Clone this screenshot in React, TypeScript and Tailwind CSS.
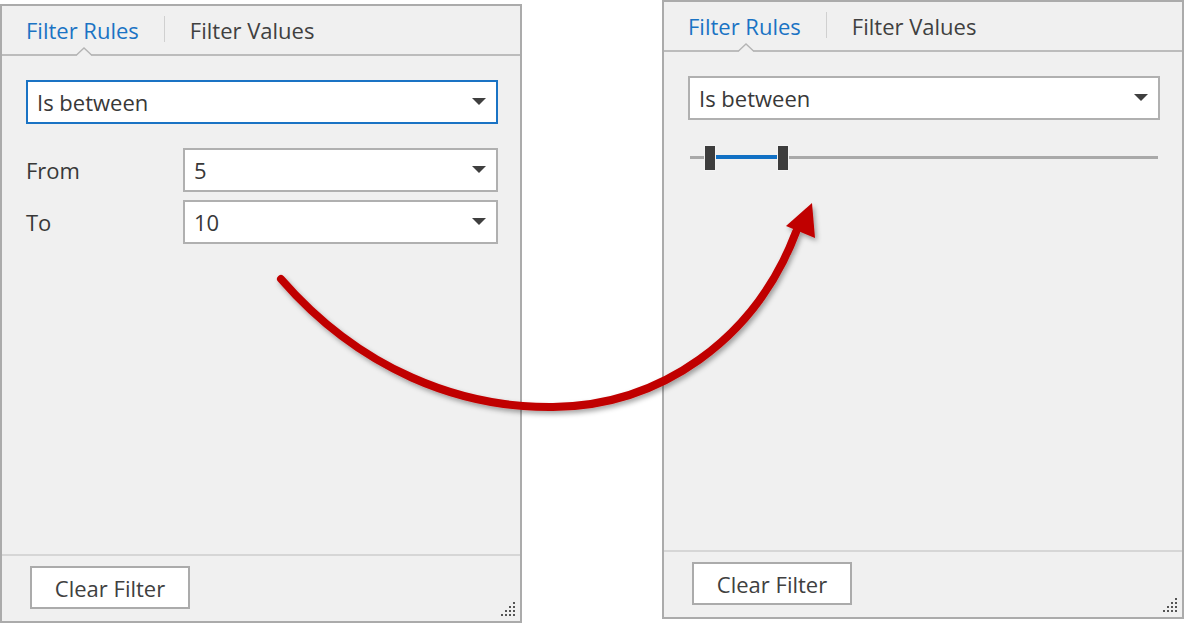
import React from "react";

function Caret() {
  return (
    <svg width="14" height="8" viewBox="0 0 14 8" className="block">
      <polygon points="0,0 14,0 7,7" fill="#3f3f3f" />
    </svg>
  );
}

function Dropdown({ value, focused, w }: { value: string; focused?: boolean; w: string }) {
  return (
    <div
      className={
        "h-[44px] bg-white flex items-center justify-between pl-[9px] pr-[10px] " +
        w +
        (focused ? " border-2 border-[#1a73c4]" : " border-2 border-[#b0b0b0]")
      }
    >
      <span className="text-[22px] text-[#383838] leading-none">{value}</span>
      <Caret />
    </div>
  );
}

function Grip() {
  const dots: [number, number][] = [];
  for (let r = 0; r < 4; r++) {
    for (let c = 3 - r; c < 4; c++) dots.push([c, r]);
  }
  return (
    <svg width="16" height="16" viewBox="0 0 16 16" className="absolute right-[4px] bottom-[4px]">
      {dots.map(([c, r], i) => (
        <rect key={i} x={c * 4 + 1} y={r * 4 + 1} width="2" height="2" fill="#555555" />
      ))}
    </svg>
  );
}

function Panel({ kind }: { kind: "left" | "right" }) {
  return (
    <div className="w-[522px] h-[619px] border-2 border-[#ababab] bg-[#f0f0f0] flex flex-col relative">
      {/* tabs */}
      <div className="h-[50px] border-b-2 border-[#bcbcbc] flex items-center relative shrink-0">
        <span className="ml-[24px] text-[22px] text-[#1a73c4] leading-none">Filter Rules</span>
        <span className="ml-[25px] w-[1px] h-[26px] bg-[#d0d0d0] -mt-[2px]" />
        <span className="ml-[25px] text-[22px] text-[#404040] leading-none">Filter Values</span>
        <svg width="16" height="9" viewBox="0 0 16 9" className="absolute left-[74px] bottom-[-2px]">
          <polygon points="0,9 8,1 16,9" fill="#f0f0f0" />
          <polyline points="0,8.5 8,1 16,8.5" fill="none" stroke="#b4b4b4" strokeWidth="1.3" />
        </svg>
      </div>
      {/* content */}
      <div className="flex-1 flex flex-col pl-[24px] pt-[24px]">
        <Dropdown value="Is between" focused={kind === "left"} w="w-[472px]" />
        {kind === "left" ? (
          <div className="flex flex-col gap-[8px] mt-[24px]">
            <div className="flex items-center">
              <span className="w-[157px] text-[22px] text-[#383838] leading-none">From</span>
              <Dropdown value="5" w="w-[315px]" />
            </div>
            <div className="flex items-center">
              <span className="w-[157px] text-[22px] text-[#383838] leading-none">To</span>
              <Dropdown value="10" w="w-[315px]" />
            </div>
          </div>
        ) : (
          <div className="relative w-[470px] h-[26px] mt-[25px] ml-[2px]">
            <div className="absolute left-0 right-[2px] top-[11px] h-[3px] bg-[#a9a9a9]" />
            <div className="absolute left-[25px] w-[64px] top-[10px] h-[4px] bg-[#1170c4]" />
            <div className="absolute left-[14px] top-0 w-[12px] h-[26px] bg-[#3d3d3d] border border-[#f4f4f4]" />
            <div className="absolute left-[87px] top-0 w-[12px] h-[26px] bg-[#3d3d3d] border border-[#f4f4f4]" />
          </div>
        )}
      </div>
      {/* footer */}
      <div className="h-[67px] border-t-2 border-[#d6d6d6] shrink-0 pl-[28px] pt-[10px]">
        <div className="w-[160px] h-[43px] bg-white border-2 border-[#ababab] flex items-center justify-center">
          <span className="text-[22px] text-[#404040] leading-none">Clear Filter</span>
        </div>
      </div>
      <Grip />
    </div>
  );
}

export default function App() {
  return (
    <div className="w-[1186px] h-[624px] bg-white relative flex font-['Open_Sans',sans-serif]">
      <div className="mt-[4px]">
        <Panel kind="left" />
      </div>
      <div className="ml-[140px]">
        <Panel kind="right" />
      </div>
      <svg
        width="1186"
        height="624"
        viewBox="0 0 1186 624"
        className="absolute left-0 top-0 pointer-events-none"
      >
        <defs>
          <filter id="sh" x="-10%" y="-10%" width="130%" height="130%">
            <feDropShadow dx="2" dy="3" stdDeviation="2.5" floodColor="#000000" floodOpacity="0.35" />
          </filter>
        </defs>
        <g filter="url(#sh)">
          <path
            d="M 281 279 C 360 370, 460 408, 553 407 C 660 406, 755 340, 796 232"
            fill="none"
            stroke="#c00000"
            strokeWidth="8"
            strokeLinecap="round"
          />
          <polygon points="812,203 815,238 786,226" fill="#c00000" />
        </g>
      </svg>
    </div>
  );
}
